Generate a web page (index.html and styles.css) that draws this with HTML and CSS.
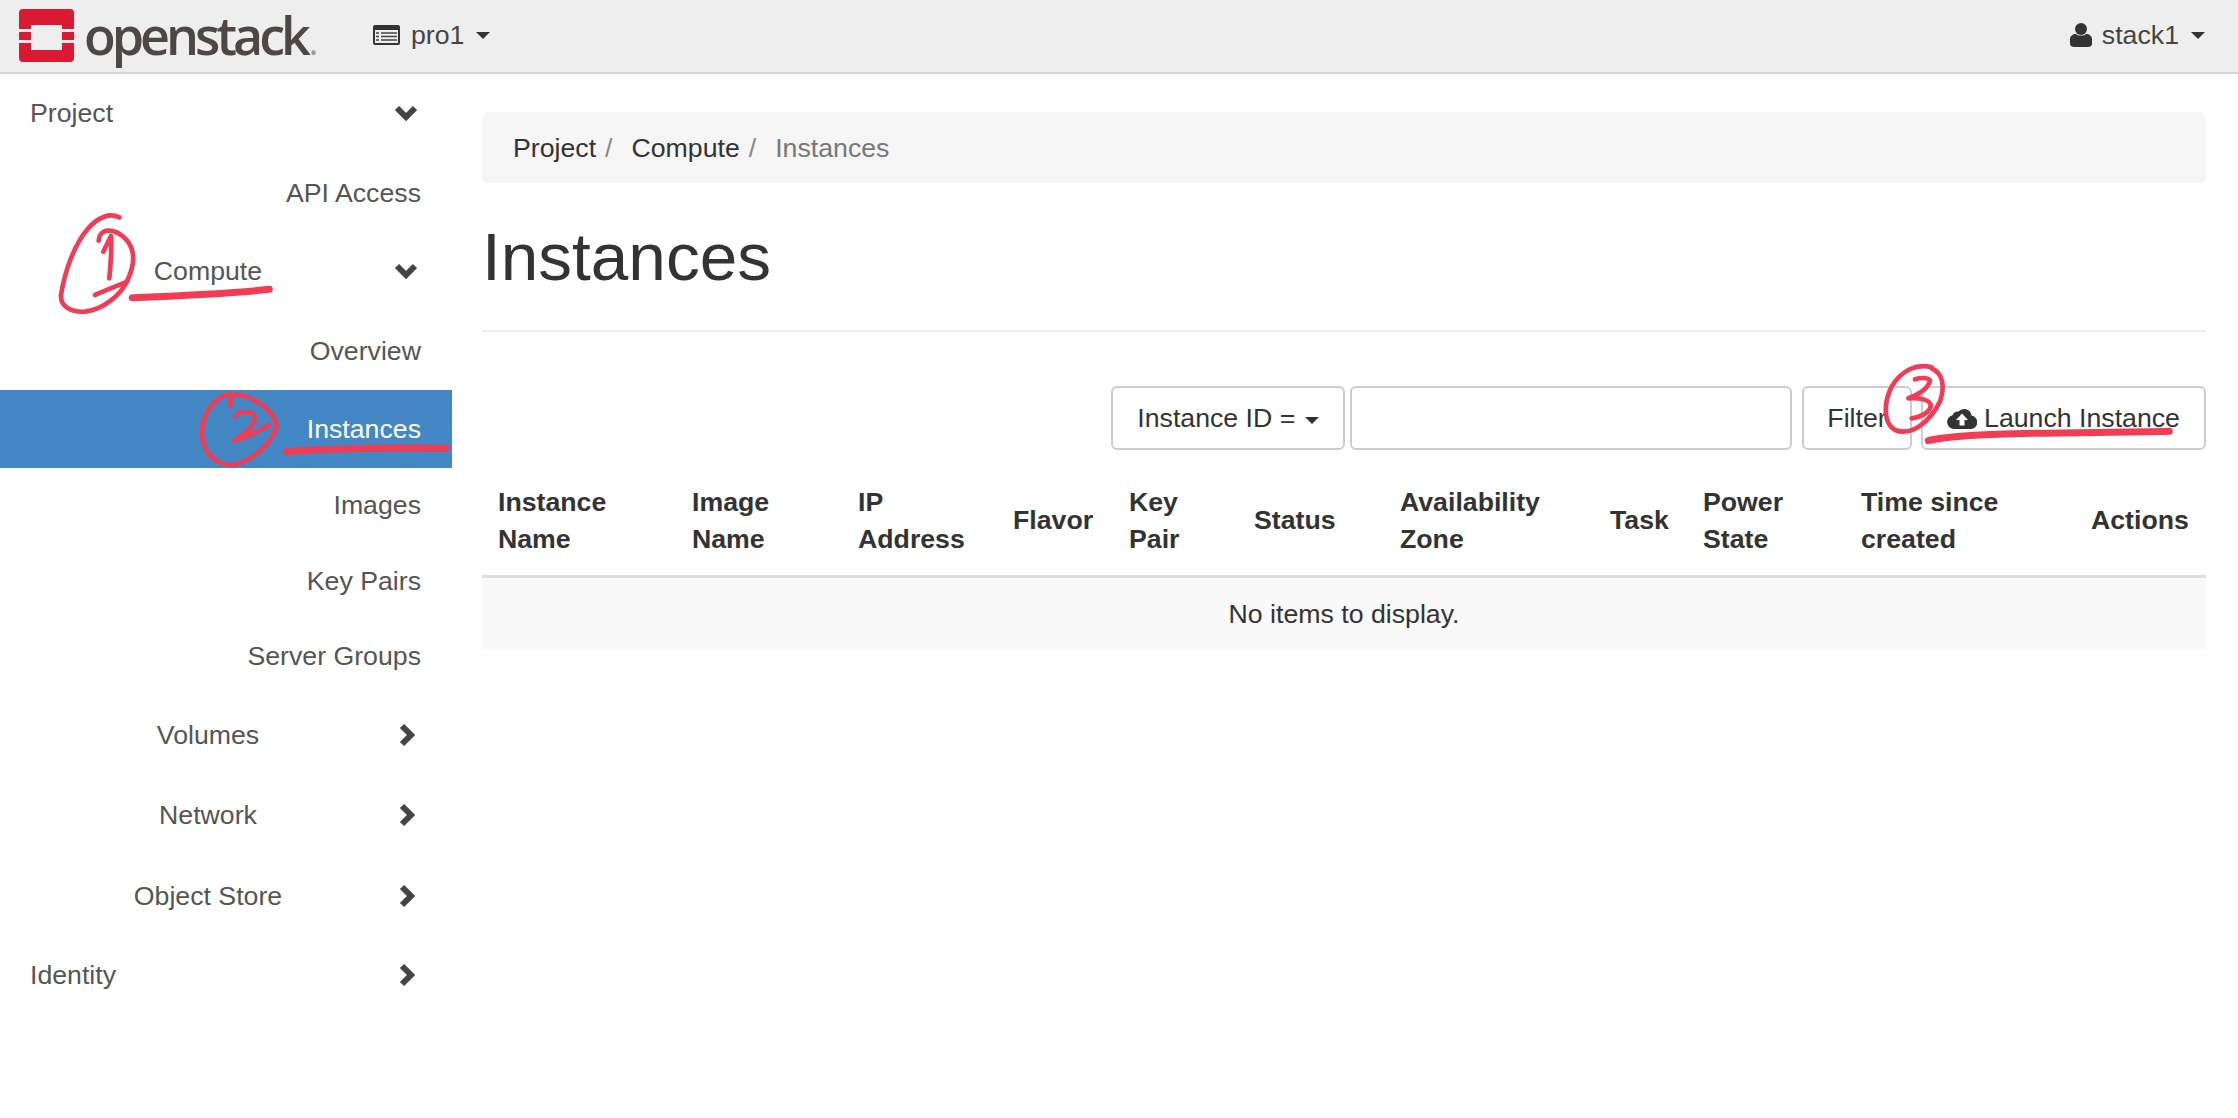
FILE: index.html
```html
<!DOCTYPE html>
<html lang="en">

<head>
  <meta charset="UTF-8" />
  <title>Instances - OpenStack Dashboard</title>
  <link rel="stylesheet" href="styles.css">
</head>

<body>
  <header class="navbar">
    <div class="brand">
      <svg class="brand-mark" viewBox="0 0 55 53">
        <path fill="#da1a32" d="M4 0H51a4 4 0 0 1 4 4V20H43V16H12V20H0V4a4 4 0 0 1 4-4Z" />
        <rect fill="#da1a32" x="0" y="23" width="12" height="8" />
        <rect fill="#da1a32" x="43" y="23" width="12" height="8" />
        <path fill="#da1a32" d="M0 34H12V41H43V34H55V49a4 4 0 0 1-4 4H4a4 4 0 0 1-4-4Z" />
      </svg>
      <span class="brand-name">openstack</span><span class="brand-dot">.</span>
    </div>
    <div class="project-picker">
      <svg class="project-icon" viewBox="0 0 27 20">
        <rect x="0" y="0" width="27" height="20" rx="2" fill="#333" />
        <rect x="2" y="5" width="23" height="13" fill="#eee" />
        <path d="M3 8H6M8 8H24M3 11.500H6M8 11.500H24M3 15H6M8 15H24" stroke="#444" stroke-width="1.600" />
      </svg>
      <span>pro1</span>
      <span class="caret"></span>
    </div>
    <div class="user-menu">
      <svg class="user-icon" viewBox="0 0 22 24">
        <circle cx="11" cy="6" r="6" fill="#333" />
        <path fill="#333" d="M0 21V16C0 13 3 11 6 11C8 13 14 13 16 11C19 11 22 13 22 16V21C22 23 20 24 18 24H4C2 24 0 23 0 21Z" />
      </svg>
      <span>stack1</span>
      <span class="caret"></span>
    </div>
  </header>

  <div class="layout">
    <nav class="sidebar">
      <div class="nav-row row-m first">
        <span class="nav-top">Project</span>
        <svg class="chevron" viewBox="0 0 24 16"><path d="M3 3L12 12L21 3" /></svg>
      </div>
      <a class="nav-link row-l">API Access</a>
      <div class="nav-row row-m first">
        <span class="nav-group">Compute</span>
        <svg class="chevron" viewBox="0 0 24 16"><path d="M3 3L12 12L21 3" /></svg>
      </div>
      <a class="nav-link row-l">Overview</a>
      <a class="nav-link row-m active">Instances</a>
      <a class="nav-link row-xs flat">Images</a>
      <a class="nav-link row-s">Key Pairs</a>
      <a class="nav-link row-s flat">Server Groups</a>
      <div class="nav-row row-l">
        <span class="nav-group">Volumes</span>
        <svg class="chevron" viewBox="0 0 24 24"><path d="M8 3L17 12L8 21" /></svg>
      </div>
      <div class="nav-row row-l">
        <span class="nav-group">Network</span>
        <svg class="chevron" viewBox="0 0 24 24"><path d="M8 3L17 12L8 21" /></svg>
      </div>
      <div class="nav-row row-xl">
        <span class="nav-group">Object Store</span>
        <svg class="chevron" viewBox="0 0 24 24"><path d="M8 3L17 12L8 21" /></svg>
      </div>
      <div class="nav-row row-s">
        <span class="nav-top">Identity</span>
        <svg class="chevron" viewBox="0 0 24 24"><path d="M8 3L17 12L8 21" /></svg>
      </div>
    </nav>

    <main class="content">
      <ol class="breadcrumb">
        <li>Project</li>
        <li class="sep">/</li>
        <li>Compute</li>
        <li class="sep">/</li>
        <li class="current">Instances</li>
      </ol>

      <div class="page-header">
        <h1>Instances</h1>
      </div>

      <div class="toolbar">
        <button class="btn btn-select">Instance ID = <span class="caret caret-small"></span></button>
        <input class="filter-input" type="text">
        <button class="btn btn-filter">Filter</button>
        <button class="btn btn-launch">
          <svg class="cloud-icon" viewBox="0 0 30 22">
            <path fill="#333" d="M7 22A7 7 0 0 1 5.500 8.200A6 6 0 0 1 11.500 4.500A7.500 7.500 0 0 1 24.500 8.500A6.800 6.800 0 0 1 24 22Z" />
            <path fill="#fff" d="M15 6.500L21 13H17.500V18.500H12.500V13H9Z" />
          </svg>
          Launch Instance
        </button>
      </div>

      <table class="instances">
        <colgroup>
          <col class="c1"><col class="c2"><col class="c3"><col class="c4"><col class="c5"><col class="c6">
          <col class="c7"><col class="c8"><col class="c9"><col class="c10"><col class="c11">
        </colgroup>
        <thead>
          <tr>
            <th>Instance Name</th>
            <th>Image Name</th>
            <th>IP Address</th>
            <th>Flavor</th>
            <th>Key Pair</th>
            <th>Status</th>
            <th>Availability Zone</th>
            <th>Task</th>
            <th>Power State</th>
            <th>Time since created</th>
            <th>Actions</th>
          </tr>
        </thead>
        <tbody>
          <tr>
            <td colspan="11">No items to display.</td>
          </tr>
        </tbody>
      </table>
    </main>
  </div>

  <!-- hand drawn notes on top of the screenshot -->
  <svg class="notes" viewBox="0 0 2238 1118">
    <g transform="translate(0 200) scale(.3333)">
      <path d="M358 52C330 38 295 50 265 85C225 130 195 210 183 285C180 320 215 338 255 335C310 328 365 285 385 235C405 190 405 150 380 120C360 98 340 90 322 92C305 94 296 108 296 122" />
      <path d="M310 155L333 108C336 150 332 195 328 235" />
      <path d="M285 285C315 272 350 258 382 245" />
      <path class="thick" d="M397 293C520 288 680 282 808 268" />
      <path d="M690 582C650 590 620 625 608 675C598 730 625 785 685 795C745 795 815 735 830 680C830 640 770 595 720 585C700 580 688 590 692 618" />
      <path d="M705 648C725 632 760 630 765 655C765 680 730 705 703 722C740 712 775 695 808 675" />
      <path class="thick" d="M860 755C1000 745 1180 742 1338 745" />
    </g>
    <g transform="translate(1780 340) scale(.3333)">
      <path d="M455 82C410 70 365 90 335 140C310 190 310 250 345 270C395 290 450 245 480 185C495 140 490 100 455 85" />
      <path d="M405 118C425 112 445 112 450 122C445 145 415 165 385 175C415 172 455 178 452 200C445 220 420 232 395 235" />
      <path class="thick" d="M445 302C560 275 900 280 1168 274" />
    </g>
  </svg>
</body>

</html>
```

FILE: styles.css
```css
* {
  box-sizing: border-box;
}

html, body {
  height: 100%;
}

body {
  margin: 0;
  position: relative;
  overflow: hidden;
  font-family: "Liberation Sans", Arial, sans-serif;
  font-size: 26.7px;
  color: #333;
  background-color: #fff;
}

/* top bar */
.navbar {
  display: flex;
  align-items: center;
  height: 74px;
  padding: 0 33px 2px 19px;
  background-color: #eee;
  border-bottom: 2px solid #d4d4d4;
}

.brand {
  display: flex;
  align-items: center;
  width: 354px;
}

.brand-mark {
  width: 55px;
  height: 53px;
  flex: none;
}

.brand-name {
  margin-left: 10px;
  font-family: "Open Sans", sans-serif;
  font-size: 52px;
  font-weight: 600;
  line-height: 60px;
  letter-spacing: -4px;
  color: #4d4845;
}

.brand-dot {
  align-self: flex-end;
  margin-left: 2px;
  font-family: "Open Sans", sans-serif;
  font-size: 36px;
  line-height: 46px;
  color: #9a9a9a;
}

.project-picker,
.user-menu {
  display: flex;
  align-items: center;
  color: #444;
}

.project-icon {
  width: 27px;
  height: 20px;
  margin: 0 11px 0 0;
}

.user-menu {
  margin-left: auto;
}

.user-icon {
  width: 22px;
  height: 24px;
  margin-right: 10px;
}

.caret {
  display: inline-block;
  width: 0;
  height: 0;
  margin-left: 12px;
  border-top: 7px solid #333;
  border-left: 7px solid transparent;
  border-right: 7px solid transparent;
}

.caret-small {
  margin-left: 2px;
  vertical-align: 3px;
}

/* page */
.layout {
  display: flex;
}

.sidebar {
  width: 452px;
  flex: none;
  color: #555;
}

.nav-row {
  display: flex;
  align-items: center;
  padding-top: 2px;
  padding-right: 28px;
}

.nav-top {
  flex: 1;
  padding-left: 30px;
}

.nav-group {
  flex: 1;
  padding-left: 28px;
  text-align: center;
}

.chevron {
  width: 24px;
  height: 24px;
  margin: 0 6px;
  fill: none;
  stroke: #444;
  stroke-width: 6;
}

.nav-link {
  display: flex;
  align-items: center;
  justify-content: flex-end;
  padding-top: 2px;
  padding-right: 31px;
}

.nav-link.active {
  padding-top: 0;
  color: #fff;
  background-color: #4387c5;
}

.nav-row.first,
.nav-link.flat {
  padding-top: 0;
}

.row-xs { height: 74px; }
.row-s { height: 76px; }
.row-m { height: 78px; }
.row-l { height: 80px; }
.row-xl { height: 82px; }

.content {
  width: 1724px;
  margin-left: 30px;
  padding-top: 38px;
}

.breadcrumb {
  display: flex;
  align-items: center;
  height: 71px;
  margin: 0;
  padding: 2px 0 0 31px;
  list-style: none;
  background-color: #f5f5f5;
  border-radius: 6px;
}

.breadcrumb .sep {
  margin: 0 19px 0 9px;
  color: #888;
}

.breadcrumb .current {
  color: #777;
}

.page-header {
  height: 149px;
  border-bottom: 2px solid #eee;
}

.page-header h1 {
  margin: 0;
  padding-top: 39px;
  font-size: 67.500px;
  font-weight: normal;
  line-height: 70px;
}

.toolbar {
  display: flex;
  justify-content: flex-end;
  height: 64px;
  margin-top: 54px;
}

.btn {
  height: 64px;
  padding: 0;
  font-family: inherit;
  font-size: 26.7px;
  color: #333;
  background-color: #fff;
  border: 2px solid #ccc;
  border-radius: 6px;
}

.btn-select {
  width: 234px;
}

.filter-input {
  width: 442px;
  height: 64px;
  margin-left: 5px;
  border: 2px solid #ccc;
  border-radius: 6px;
}

.btn-filter {
  width: 110px;
  margin-left: 10px;
}

.btn-launch {
  display: flex;
  align-items: center;
  justify-content: center;
  width: 285px;
  margin-left: 9px;
}

.cloud-icon {
  width: 30px;
  height: 22px;
  margin-right: 7px;
}

.instances {
  width: 100%;
  margin-top: 12px;
  border-collapse: collapse;
  table-layout: fixed;
}

.instances th {
  height: 114px;
  padding: 5px 16px 0;
  text-align: left;
  line-height: 37px;
  border-bottom: 3px solid #ddd;
}

.instances td {
  height: 73px;
  padding: 2px 0 0;
  text-align: center;
  background-color: #f9f9f9;
}

.c1 { width: 194px; }
.c2 { width: 166px; }
.c3 { width: 155px; }
.c4 { width: 116px; }
.c5 { width: 125px; }
.c6 { width: 146px; }
.c7 { width: 210px; }
.c8 { width: 93px; }
.c9 { width: 158px; }
.c10 { width: 230px; }
.c11 { width: 131px; }

/* red marker notes */
.notes {
  position: absolute;
  top: 0;
  left: 0;
  width: 2238px;
  height: 1118px;
  fill: none;
  stroke: #f03c55;
  stroke-width: 14;
  stroke-linecap: round;
  stroke-linejoin: round;
  pointer-events: none;
}

.notes .thick {
  stroke-width: 21;
}
```
